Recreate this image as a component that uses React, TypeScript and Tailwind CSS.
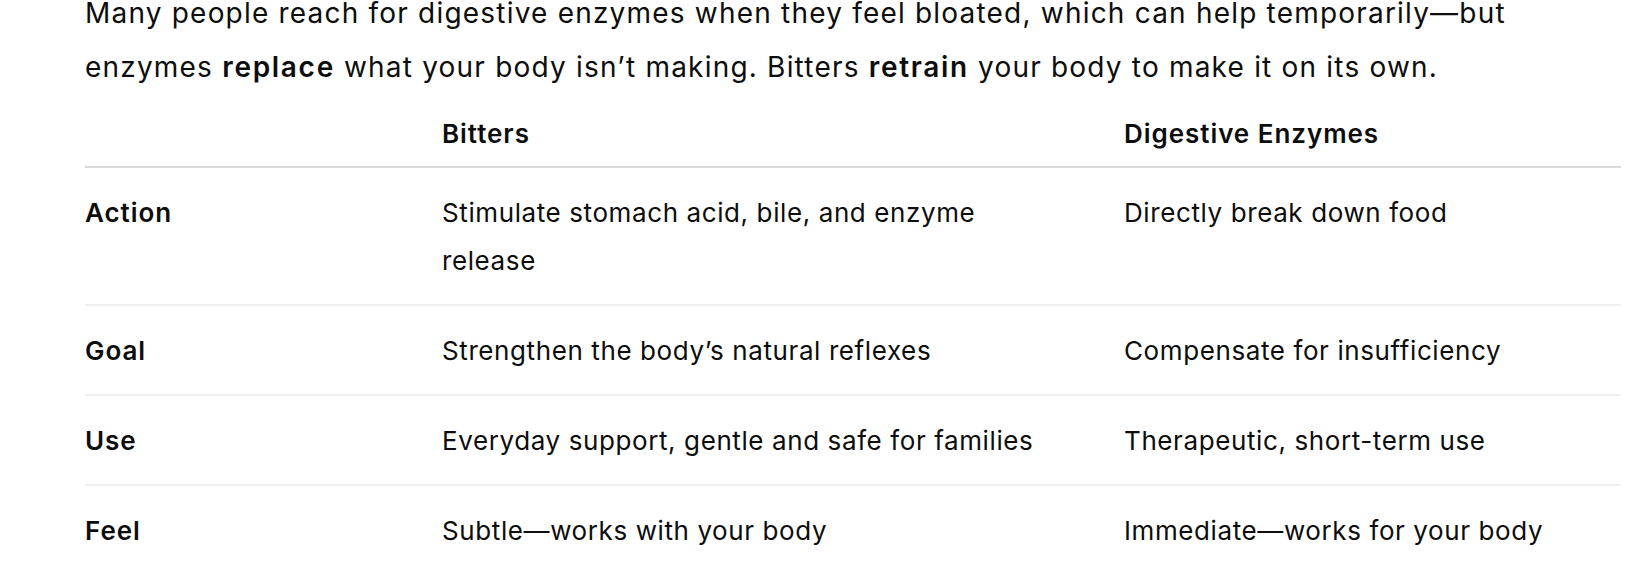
import React from "react";

const rows: { label: string; bitters: React.ReactNode; enzymes: string }[] = [
  {
    label: "Action",
    bitters: (
      <>
        Stimulate stomach acid, bile, and enzyme
        <br />
        release
      </>
    ),
    enzymes: "Directly break down food",
  },
  {
    label: "Goal",
    bitters: "Strengthen the body\u2019s natural reflexes",
    enzymes: "Compensate for insufficiency",
  },
  {
    label: "Use",
    bitters: "Everyday support, gentle and safe for families",
    enzymes: "Therapeutic, short-term use",
  },
  {
    label: "Feel",
    bitters: "Subtle\u2014works with your body",
    enzymes: "Immediate\u2014works for your body",
  },
];

export default function App() {
  return (
    <div
      className="w-full h-[586px] overflow-hidden bg-white text-[#0d0d0d]"
      style={{ fontFamily: "Inter, 'Noto Sans', sans-serif" }}
    >
      <div className="pl-[85px] pr-[17px]">
        <p className="mt-[-14px] mb-[16px] text-[28px] leading-[54px] tracking-[1.2px] whitespace-nowrap">
          Many people reach for digestive enzymes when they feel bloated, which can help temporarily—but
          <br />
          enzymes <strong className="font-semibold tracking-[1.7px]">replace</strong> what your body isn’t making.
          Bitters <strong className="font-semibold tracking-[1.7px]">retrain</strong> your body to make it on its
          own.
        </p>
        <div className="w-[1536px] text-[26px] leading-[48px] tracking-[0.6px]">
          <div className="grid grid-cols-[357px_682px_497px] border-b-2 border-[#d9d9d9] pb-[8px] font-semibold tracking-[0.95px]">
            <div></div>
            <div>Bitters</div>
            <div>Digestive Enzymes</div>
          </div>
          {rows.map((r, i) => (
            <div
              key={r.label}
              className={
                i < rows.length - 1
                  ? "grid grid-cols-[357px_682px_497px] pt-[21px] pb-[19px] border-b-2 border-[#f0f0f0]"
                  : "grid grid-cols-[357px_682px_497px] pt-[21px] pb-[19px]"
              }
            >
              <div className="font-semibold tracking-[0.95px]">{r.label}</div>
              <div className="whitespace-nowrap">{r.bitters}</div>
              <div className="whitespace-nowrap">{r.enzymes}</div>
            </div>
          ))}
        </div>
      </div>
    </div>
  );
}
